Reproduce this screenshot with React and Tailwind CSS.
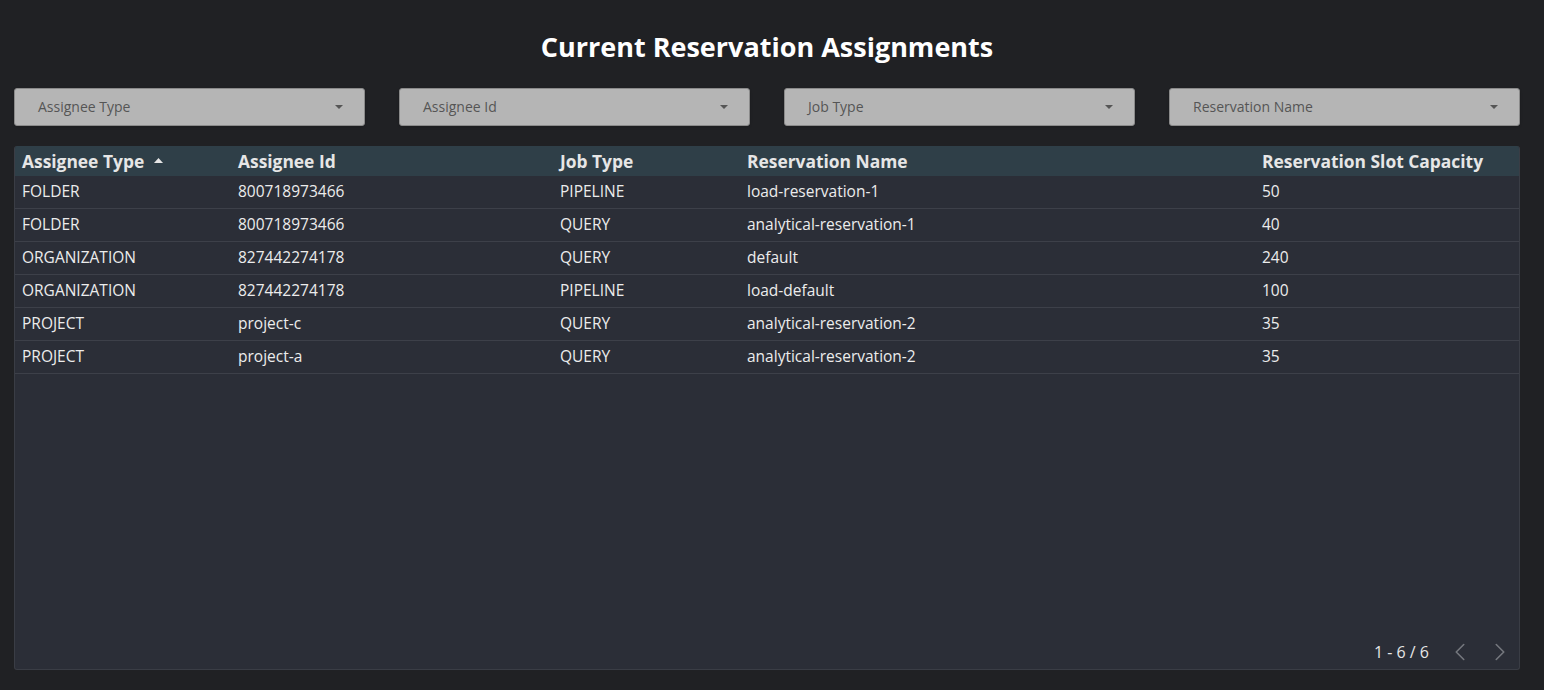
import { ChevronLeft, ChevronRight } from 'lucide-react';

const filters = ['Assignee Type', 'Assignee Id', 'Job Type', 'Reservation Name'];

const columns = [
  { label: 'Assignee Type', w: 'w-[216px]', sort: true },
  { label: 'Assignee Id', w: 'w-[322px]' },
  { label: 'Job Type', w: 'w-[187px]' },
  { label: 'Reservation Name', w: 'w-[515px]' },
  { label: 'Reservation Slot Capacity', w: '' },
];

const rows = [
  ['FOLDER', '800718973466', 'PIPELINE', 'load-reservation-1', '50'],
  ['FOLDER', '800718973466', 'QUERY', 'analytical-reservation-1', '40'],
  ['ORGANIZATION', '827442274178', 'QUERY', 'default', '240'],
  ['ORGANIZATION', '827442274178', 'PIPELINE', 'load-default', '100'],
  ['PROJECT', 'project-c', 'QUERY', 'analytical-reservation-2', '35'],
  ['PROJECT', 'project-a', 'QUERY', 'analytical-reservation-2', '35'],
];

export default function App() {
  return (
    <div className="w-[1544px] h-[690px] bg-[#202124] pl-[14px] pr-[24px] pt-[28px] pb-[20px] flex flex-col overflow-hidden" style={{ fontFamily: '"Open Sans", sans-serif' }}>
      <h1 className="text-center text-white font-bold text-[27px] leading-[38px] h-[38px]">
        Current Reservation Assignments
      </h1>

      {/* Filter dropdowns */}
      <div className="flex gap-[34px] mt-[22px]">
        {filters.map((f) => (
          <div key={f} className="w-[351px] h-[38px] bg-[#b5b5b5] rounded-[3px] border border-[#8a8a8a] flex items-center pl-[23px] pr-[21px] shadow-sm">
            <span className="flex-1 text-[14px] text-[#555555] pb-[1px]">{f}</span>
            <svg width="8" height="4" viewBox="0 0 8 4"><path d="M0 0 L8 0 L4 4 Z" fill="#555555" /></svg>
          </div>
        ))}
      </div>

      {/* Table */}
      <div className="mt-[20px] flex-1 bg-[#2b2e37] rounded-[3px] border-x border-b border-[#3a3d45] flex flex-col overflow-hidden">
        <div className="flex h-[30px] bg-[#2f3f48] items-center">
          {columns.map((c) => (
            <div key={c.label} className={`${c.w || 'flex-1'} pl-[7px] flex items-center gap-[10px] text-[17.4px] font-bold text-[#e6e6e6]`}>
              {c.label}
              {c.sort && (
                <svg width="9" height="5" viewBox="0 0 9 5"><path d="M0 5 L9 5 L4.5 0 Z" fill="#e6e6e6" /></svg>
              )}
            </div>
          ))}
        </div>
        {rows.map((r, i) => (
          <div key={i} className="flex h-[33px] items-center border-b border-[#3d4049]">
            {r.map((cell, j) => (
              <div key={j} className={`${columns[j].w || 'flex-1'} pl-[7px] text-[15.5px] text-[#ececec]`}>
                {cell}
              </div>
            ))}
          </div>
        ))}
        <div className="flex-1" />
        <div className="flex items-center justify-end h-[30px] pr-[4px] mb-[2px] text-[#e6e6e6] text-[16px]">
          <span className="mr-[16px]">1 - 6 / 6</span>
          <ChevronLeft className="w-[30px] h-[30px] text-[#73767c] mr-[10px]" strokeWidth={1.3} />
          <ChevronRight className="w-[30px] h-[30px] text-[#73767c]" strokeWidth={1.3} />
        </div>
      </div>
    </div>
  );
}
